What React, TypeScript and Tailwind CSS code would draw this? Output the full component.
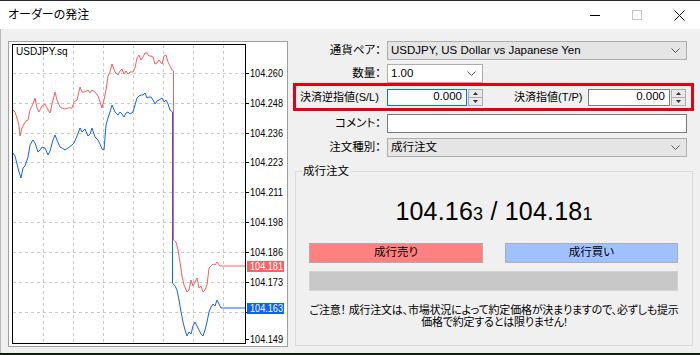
import React from 'react';

const red =
  '13,110 15,112 17,118 19,126 20,136 22,128 24,124 26,121 28,120 30,110 33,104 35,98 37,108 39,112 42,106 45,104 48,110 50,113 53,100 55,92 57,100 60,107 62,108 65,109 68,108 72,108 74,102 77,100 80,87 82,92 85,92 88,90 90,93 92,90 95,92 98,96 100,102 102,108 104,100 106,90 108,76 110,72 112,64 115,72 118,75 120,71 122,69 124,74 126,71 128,74 130,72 133,72 135,68 137,58 139,55 141,60 143,57 145,53 147,53 149,56 151,56 153,57 155,64 157,63 159,60 162,64 164,56 166,55 168,62 170,66 172,70 173.5,71 173.5,240 176,242 178,250 180,262 182,276 184,285 187,292 189,290 191,280 193,286 195,282 197,278 199,288 201,286 203,292 205,290 207,285 209,268 211,266 213,264 215,265 217,262 220,266 245,266';

const blue =
  '13,153 15,156 17,164 19,172 21,178 23,168 25,166 28,157 30,145 33,140 35,143 38,152 40,150 42,147 45,148 48,155 50,151 53,140 55,135 57,140 60,147 62,148 65,150 68,148 72,145 74,143 77,136 80,128 82,132 85,129 88,136 90,134 92,128 95,137 98,140 100,144 102,149 104,150 106,125 108,118 110,112 112,105 115,112 118,115 120,112 122,114 124,117 126,113 128,112 130,114 133,112 135,105 137,98 139,96 141,95 143,95 145,93 147,98 149,97 151,97 153,100 155,104 157,101 159,100 162,98 164,102 166,100 168,104 170,110 172.5,112 172.5,283 175,286 177,290 179,300 181,312 183,322 185,330 187,336 189,332 191,334 193,326 195,322 197,326 199,330 201,334 203,336 205,330 207,322 209,312 211,307 213,304 215,306 217,300 219,304 221,308 245,308';

const gridX = [43, 73, 103, 133, 163, 193, 223];
const gridY = [73, 103, 133, 162, 192, 222, 252, 282, 312];
const labels: [string, number][] = [
  ['104.260', 73],
  ['104.248', 103],
  ['104.236', 133],
  ['104.223', 162],
  ['104.211', 192],
  ['104.198', 222],
  ['104.186', 252],
  ['104.173', 282],
  ['104.149', 339],
];

const font = 'Liberation Sans, sans-serif';

function Chart() {
  return (
    <svg width="280" height="306" viewBox="8 41 280 306" className="block">
      <rect x="8.5" y="41.5" width="279" height="305" fill="#fff" stroke="#a0a0a0" />
      {gridX.map(x => (
        <line key={x} x1={x + 0.5} y1="45" x2={x + 0.5} y2="343" stroke="#c8c8c8" strokeDasharray="3 3" />
      ))}
      {gridY.map(y => (
        <line key={y} x1="13" y1={y + 0.5} x2="245" y2={y + 0.5} stroke="#c8c8c8" strokeDasharray="3 3" />
      ))}
      <rect x="12.5" y="44.5" width="233" height="299" fill="none" stroke="#000" />
      {[...labels.map(l => l[1]), 312].map(y => (
        <line key={y} x1="246" y1={y + 0.5} x2="249" y2={y + 0.5} stroke="#000" />
      ))}
      {labels.map(([t, y]) => (
        <text key={t} x="250" y={y + 3.5} fontSize="10" textLength="33" lengthAdjust="spacingAndGlyphs" fontFamily={font} fill="#000">
          {t}
        </text>
      ))}
      <polyline points={blue} fill="none" stroke="#1760ff" strokeWidth="1" />
      <polyline points={red} fill="none" stroke="#ff5c5c" strokeWidth="1" />
      <text x="16" y="55" fontSize="10" fontFamily={font} fill="#000">
        USDJPY.sq
      </text>
      <rect x="247" y="261" width="37" height="11" fill="#f26565" />
      <text x="250" y="270" fontSize="10" textLength="33" lengthAdjust="spacingAndGlyphs" fontFamily={font} fill="#fff">
        104.181
      </text>
      <rect x="247" y="303" width="37" height="11" fill="#0d62f0" />
      <text x="250" y="312" fontSize="10" textLength="33" lengthAdjust="spacingAndGlyphs" fontFamily={font} fill="#fff">
        104.163
      </text>
    </svg>
  );
}

function Chevron() {
  return (
    <svg width="9" height="5" viewBox="0 0 9 5">
      <polyline points="0.5,0.5 4.5,4.5 8.5,0.5" fill="none" stroke="#555" strokeWidth="1" />
    </svg>
  );
}

function Spinner() {
  return (
    <div className="w-[15px] h-[17px] border border-[#adadad] bg-[#e9e9e9] flex flex-col ml-[1px]">
      <div className="flex-1 flex items-center justify-center border-b border-[#adadad]">
        <svg width="5" height="3" viewBox="0 0 5 3">
          <polygon points="0,3 2.5,0 5,3" fill="#333" />
        </svg>
      </div>
      <div className="flex-1 flex items-center justify-center">
        <svg width="5" height="3" viewBox="0 0 5 3">
          <polygon points="0,0 5,0 2.5,3" fill="#333" />
        </svg>
      </div>
    </div>
  );
}

export default function App() {
  return (
    <div className="w-[700px] h-[355px] overflow-hidden flex flex-col bg-[#f0f0f0] text-black text-[11.5px] font-['Liberation_Sans','Noto_Sans_CJK_JP',sans-serif] [font-feature-settings:'palt']">
      <div className="h-px bg-[#2a2a2a]" />

      {/* TITLE BAR */}
      <div className="h-[28px] bg-white flex items-center">
        <span className="pl-[8px] text-[12px]">オーダーの発注</span>
        <div className="ml-auto flex h-full">
          <div className="w-[42px] flex items-center justify-center">
            <div className="w-[10px] h-px bg-black" />
          </div>
          <div className="w-[42px] flex items-center justify-center">
            <div className="w-[10px] h-[10px] border border-[#c4c4c4]" />
          </div>
          <div className="w-[42px] flex items-center justify-center">
            <svg width="11" height="11" viewBox="0 0 11 11">
              <path d="M0.5 0.5 L10.5 10.5 M10.5 0.5 L0.5 10.5" stroke="#111" strokeWidth="1" />
            </svg>
          </div>
        </div>
      </div>

      {/* BODY */}
      <div className="flex h-[324px] border-l border-[#b9b9b9]">
        <div className="ml-[7px] mt-[12px]">
          <Chart />
        </div>

        <div className="flex-1 flex flex-col">
          {/* 通貨ペア */}
          <div className="flex items-center h-[19px] mt-[12px]">
            <span className="w-[93px] text-right">通貨ペア：</span>
            <div className="ml-[6px] w-[300px] h-[19px] bg-[#e5e5e5] border border-[#adadad] flex items-center justify-between pl-[3px] pr-[6px]">
              <span>USDJPY, US Dollar vs Japanese Yen</span>
              <Chevron />
            </div>
          </div>

          {/* 数量 */}
          <div className="flex items-center h-[19px] mt-[4px]">
            <span className="w-[93px] text-right">数量：</span>
            <div className="ml-[6px] w-[96px] h-[19px] bg-white border border-[#adadad] flex items-center justify-between pl-[3px] pr-[6px]">
              <span>1.00</span>
              <Chevron />
            </div>
          </div>

          {/* S/L T/P */}
          <div className="ml-[5px] w-[401px] h-[28px] border-[3px] border-[#e60012] flex items-center text-[11px]">
            <span className="w-[91px] pl-[4px] whitespace-nowrap">決済逆指値(S/L)</span>
            <div className="w-[80px] h-[17px] bg-white border border-[#0078d7] flex items-center justify-end pr-[4px] text-[11.5px]">
              0.000
            </div>
            <Spinner />
            <span className="ml-[31px] w-[74px] whitespace-nowrap">決済指値(T/P)</span>
            <div className="w-[82px] h-[17px] bg-white border border-[#7a7a7a] flex items-center justify-end pr-[4px] text-[11.5px]">
              0.000
            </div>
            <Spinner />
          </div>

          {/* コメント */}
          <div className="flex items-center h-[19px] mt-[3px]">
            <span className="w-[93px] text-right">コメント：</span>
            <div className="ml-[6px] w-[300px] h-[19px] bg-white border border-[#7a7a7a]" />
          </div>

          {/* 注文種別 */}
          <div className="flex items-center h-[19px] mt-[5px]">
            <span className="w-[93px] text-right">注文種別：</span>
            <div className="ml-[6px] w-[300px] h-[19px] bg-[#e5e5e5] border border-[#adadad] flex items-center justify-between pl-[3px] pr-[6px]">
              <span>成行注文</span>
              <Chevron />
            </div>
          </div>

          {/* GROUP */}
          <div className="relative mt-[14px] ml-[7px] w-[398px] h-[175px] border border-[#dcdcdc] flex flex-col">
            <span className="absolute -top-[8px] left-[6px] bg-[#f0f0f0] px-[1px] leading-[14px]">成行注文</span>

            <div className="mt-[24px] text-center text-[25px] leading-[30px] tracking-[0.2px]">
              104.16<span className="text-[18px]">3</span> / 104.18<span className="text-[18px]">1</span>
            </div>

            <div className="mt-[14px] ml-[13px] flex gap-[22px]">
              <div className="w-[174px] h-[20px] bg-[#ff8080] border border-[#adadad] flex items-center justify-center">
                成行売り
              </div>
              <div className="w-[173px] h-[20px] bg-[#a0c0ff] border border-[#adadad] flex items-center justify-center">
                成行買い
              </div>
            </div>

            <div className="mt-[8px] ml-[13px] w-[369px] h-[20px] bg-[#c8c8c8] border border-[#d4d4d4]" />

            <p className="mt-[13px] text-center text-[11px] leading-[12px] tracking-[-0.2px]">
              ご注意！ 成行注文は、市場状況によって約定価格が決まりますので、必ずしも提示
              <br />
              価格で約定するとは限りません!
            </p>
          </div>
        </div>
      </div>

      <div className="h-[2px] bg-[#0c1f0c]" />
    </div>
  );
}
